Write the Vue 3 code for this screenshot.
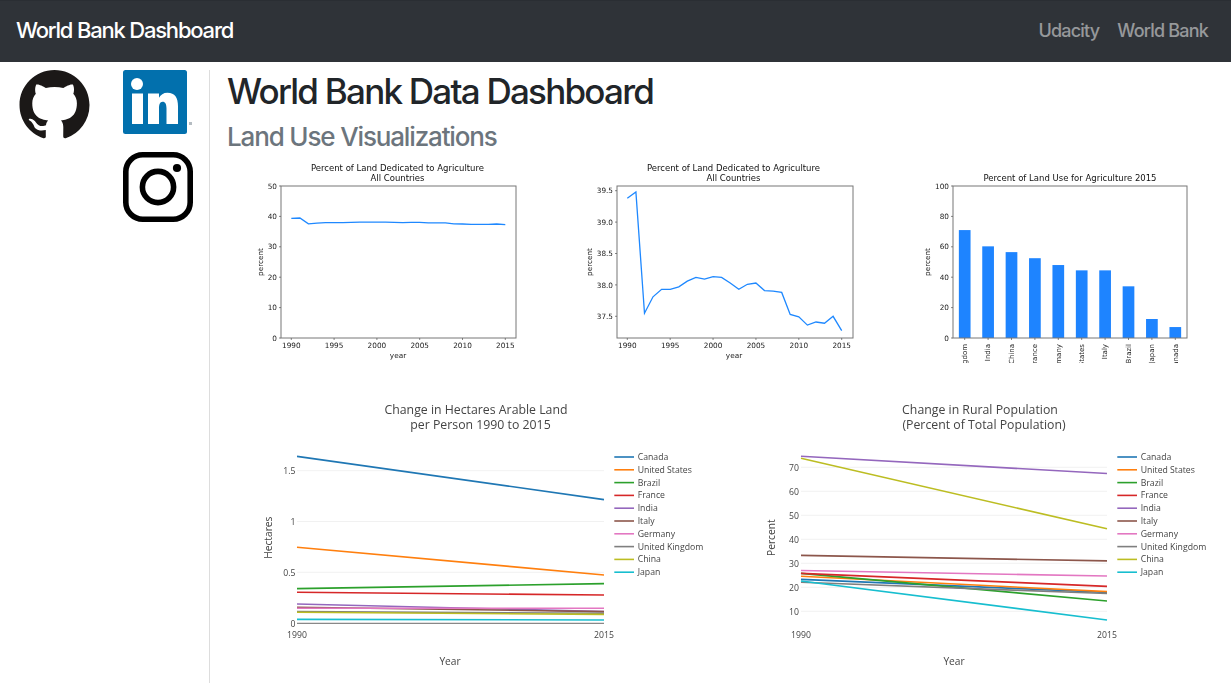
<script setup>
const agri = [39.38,39.48,37.55,37.81,37.93,37.93,37.97,38.06,38.12,38.09,38.13,38.12,38.03,37.93,38.01,38.03,37.91,37.90,37.88,37.53,37.49,37.36,37.41,37.39,37.50,37.27]
const pts = (fx, fy) => agri.map((v, i) => `${fx(i).toFixed(1)},${fy(v).toFixed(1)}`).join(' ')
const line1 = pts(i => 291.3 + i * 8.56, v => 338 - v * 3.04)
const line2 = pts(i => 627.3 + i * 8.576, v => 190.7 + (39.5 - v) * 62.8)

const ticks1x = [1990,1995,2000,2005,2010,2015].map((y, i) => ({ y, x: 291.3 + i * 42.8 }))
const ticks2x = [1990,1995,2000,2005,2010,2015].map((y, i) => ({ y, x: 627.3 + i * 42.88 }))
const ticks1y = [0,10,20,30,40,50].map(v => ({ v, y: 338 - v * 3.04 }))
const ticks2y = ['39.5','39.0','38.5','38.0','37.5'].map((v, i) => ({ v, y: 190.7 + i * 31.4 }))
const ticks3y = [0,20,40,60,80,100].map(v => ({ v, y: 338 - v * 1.52 }))
const bars = [['United Kingdom',71],['India',60.3],['China',56.5],['France',52.5],['Germany',48],['United States',44.5],['Italy',44.5],['Brazil',34],['Japan',12.5],['Canada',7.2]]
  .map(([n, v], i) => ({ n, v, x: 953 + 23.4 * (i + 0.5), h: v * 1.52 }))

const names = ['Canada','United States','Brazil','France','India','Italy','Germany','United Kingdom','China','Japan']
const colors = ['#1f77b4','#ff7f0e','#2ca02c','#d62728','#9467bd','#8c564b','#e377c2','#7f7f7f','#bcbd22','#17becf']
const arable = [[1.64,1.215],[.747,.475],[.341,.39],[.305,.278],[.19,.115],[.157,.115],[.148,.148],[.115,.098],[.108,.088],[.039,.033]]
const rural = [[23.3,17.9],[24.6,18.2],[25.8,14.3],[25.8,20.4],[74.6,67.4],[33.3,31],[27,24.7],[22.1,17.4],[73.75,44.4],[22.6,6.4]]

const plotA = {
  box: '232 395 490 288', x0: 297, x1: 604, legendX: 614.3, ylabel: 'Hectares', ylabelX: 268, yearX: 450, tickX: 295.5,
  titles: [['Change in Hectares Arable Land', 476, 413.5], ['per Person 1990 to 2015', 480.5, 428.5]],
  grid: [['1.5', 470.7], ['1', 521.5], ['0.5', 572.3], ['0', 623.3]], zero: 623.3,
  series: arable.map((s, i) => ({ c: colors[i], y0: 623.3 - s[0] * 101.8, y1: 623.3 - s[1] * 101.8 }))
}
const plotB = {
  box: '736 395 490 288', x0: 801, x1: 1107, legendX: 1117.3, ylabel: 'Percent', ylabelX: 771.7, yearX: 954, tickX: 799,
  titles: [['Change in Rural Population', 980, 413.5], ['(Percent of Total Population)', 984, 428.5]],
  grid: [70,60,50,40,30,20,10].map(v => [String(v), 635.3 - v * 2.4]), zero: null,
  series: rural.map((s, i) => ({ c: colors[i], y0: 635.3 - s[0] * 2.4, y1: 635.3 - s[1] * 2.4 }))
}
const plots = [plotA, plotB]
const legend = names.map((n, i) => ({ n, c: colors[i], y: 457 + i * 12.8 }))
</script>

<template>
  <div class="page">
    <nav class="navbar">
      <a class="brand">World Bank Dashboard</a>
      <div class="links">
        <a>Udacity</a>
        <a>World Bank</a>
      </div>
    </nav>

    <div class="layout">
      <aside class="side">
        <svg class="github" viewBox="0 0 16 16" width="71" height="70" aria-label="GitHub">
          <path fill="#1b1817" d="M8 0C3.58 0 0 3.58 0 8c0 3.54 2.29 6.53 5.47 7.59.4.07.55-.17.55-.38 0-.19-.01-.82-.01-1.49-2.01.37-2.53-.49-2.69-.94-.09-.23-.48-.94-.82-1.13-.28-.15-.68-.52-.01-.53.63-.01 1.08.58 1.23.82.72 1.21 1.87.87 2.33.66.07-.52.28-.87.51-1.07-1.78-.2-3.64-.89-3.64-3.95 0-.87.31-1.59.82-2.15-.08-.2-.36-1.02.08-2.12 0 0 .67-.21 2.2.82.64-.18 1.32-.27 2-.27.68 0 1.36.09 2 .27 1.53-1.04 2.2-.82 2.2-.82.44 1.1.16 1.92.08 2.12.51.56.82 1.27.82 2.15 0 3.07-1.87 3.75-3.65 3.95.29.25.54.73.54 1.48 0 1.07-.01 1.93-.01 2.2 0 .21.15.46.55.38A8.013 8.013 0 0016 8c0-4.42-3.58-8-8-8z"/>
        </svg>
        <svg class="linkedin" viewBox="0 0 70 70" width="70" height="70" aria-label="LinkedIn">
          <rect width="64" height="64" rx="2.5" fill="#0270ad"/>
          <circle cx="14" cy="14" r="6" fill="#fff"/>
          <rect x="9" y="23.5" width="11" height="30.5" fill="#fff"/>
          <path fill="#fff" d="M25 23.5h11v4.2c1.6-2.9 4.4-5 8.4-5 7.6 0 10.6 5 10.6 13.4V54H43.5V38.6c0-4.2-1.2-6.9-3.9-6.9-2.8 0-3.6 2.9-3.6 6.9V54H25z"/>
          <rect x="66" y="52" width="3" height="3" fill="#b5bcc2"/>
        </svg>
        <svg class="instagram" viewBox="0 0 70 70" width="70" height="70" aria-label="Instagram">
          <rect x="2.8" y="2.8" width="64.4" height="64.4" rx="17" fill="none" stroke="#000" stroke-width="5.6"/>
          <circle cx="35" cy="35" r="15.6" fill="none" stroke="#000" stroke-width="5.6"/>
          <circle cx="54" cy="16" r="4.1" fill="#000"/>
        </svg>
      </aside>

      <main class="content">
        <h1>World Bank Data Dashboard</h1>
        <h2>Land Use Visualizations</h2>

        <div class="row-top">
          <svg class="chart soft" viewBox="232 160 320 203" width="320" height="203">
            <text class="mt" x="397.5" y="171">Percent of Land Dedicated to Agriculture</text>
            <text class="mt" x="397.5" y="181">All Countries</text>
            <rect class="spine" x="281" y="186" width="235" height="152"/>
            <g v-for="t in ticks1x" :key="t.y">
              <line class="tick" :x1="t.x" :x2="t.x" y1="338" y2="340"/>
              <text class="ml mid" :x="t.x" y="348">{{ t.y }}</text>
            </g>
            <g v-for="t in ticks1y" :key="t.v">
              <line class="tick" x1="279" x2="281" :y1="t.y" :y2="t.y"/>
              <text class="ml end" x="277" :y="t.y + 2.6">{{ t.v }}</text>
            </g>
            <polyline class="blue" :points="line1"/>
            <text class="ml mid" x="398" y="358">year</text>
            <text class="ml mid" transform="translate(263 262) rotate(-90)">percent</text>
          </svg>

          <svg class="chart soft" viewBox="568 160 320 203" width="320" height="203">
            <text class="mt" x="733.5" y="171">Percent of Land Dedicated to Agriculture</text>
            <text class="mt" x="733.5" y="181">All Countries</text>
            <rect class="spine" x="617" y="186" width="236" height="152"/>
            <g v-for="t in ticks2x" :key="t.y">
              <line class="tick" :x1="t.x" :x2="t.x" y1="338" y2="340"/>
              <text class="ml mid" :x="t.x" y="348">{{ t.y }}</text>
            </g>
            <g v-for="t in ticks2y" :key="t.v">
              <line class="tick" x1="615" x2="617" :y1="t.y" :y2="t.y"/>
              <text class="ml end" x="613" :y="t.y + 2.6">{{ t.v }}</text>
            </g>
            <polyline class="blue" :points="line2"/>
            <text class="ml mid" x="734" y="358">year</text>
            <text class="ml mid" transform="translate(592 262) rotate(-90)">percent</text>
          </svg>

          <svg class="chart soft" viewBox="904 160 320 203" width="320" height="203">
            <text class="mt" x="1070" y="181">Percent of Land Use for Agriculture 2015</text>
            <rect v-for="b in bars" :key="b.n" class="bar" :x="b.x - 5.85" :y="338 - b.h" width="11.7" :height="b.h"/>
            <rect class="spine" x="953" y="186" width="234" height="152"/>
            <g v-for="t in ticks3y" :key="t.v">
              <line class="tick" x1="951" x2="953" :y1="t.y" :y2="t.y"/>
              <text class="ml end" x="949" :y="t.y + 2.6">{{ t.v }}</text>
            </g>
            <g v-for="b in bars" :key="'l' + b.n">
              <line class="tick" :x1="b.x" :x2="b.x" y1="338" y2="340"/>
              <text class="bl" :transform="`translate(${b.x + 2.2} 344) rotate(-90)`">{{ b.n }}</text>
            </g>
            <text class="ml mid" transform="translate(930 262) rotate(-90)">percent</text>
          </svg>
        </div>

        <div class="row-bottom">
          <svg v-for="p in plots" :key="p.ylabel" class="chart soft" :viewBox="p.box" width="490" height="288">
            <text v-for="t in p.titles" :key="t[0]" class="pt" :x="t[1]" :y="t[2]">{{ t[0] }}</text>
            <g v-for="g in p.grid" :key="g[0]">
              <line v-if="g[1] !== p.zero" class="grid" :x1="p.x0" :x2="p.x1" :y1="g[1]" :y2="g[1]"/>
              <text class="pl end" :x="p.tickX" :y="g[1] + 3.2">{{ g[0] }}</text>
            </g>
            <line v-if="p.zero" class="zero" :x1="p.x0" :x2="p.x1" :y1="p.zero" :y2="p.zero"/>
            <line v-for="s in p.series" :key="s.c" class="trace" :stroke="s.c" :x1="p.x0" :x2="p.x1" :y1="s.y0" :y2="s.y1"/>
            <text class="pl mid" :x="p.x0" y="638.3">1990</text>
            <text class="pl mid" :x="p.x1" y="638.3">2015</text>
            <text class="pa mid" :x="p.yearX" y="664.5">Year</text>
            <text class="pa mid" :transform="`translate(${p.ylabelX + 3.5} 537.7) rotate(-90)`">{{ p.ylabel }}</text>
            <g v-for="l in legend" :key="l.n">
              <line class="trace" :stroke="l.c" :x1="p.legendX" :x2="p.legendX + 19.7" :y1="l.y" :y2="l.y"/>
              <text class="pl" :x="p.legendX + 23.4" :y="l.y + 3">{{ l.n }}</text>
            </g>
          </svg>
        </div>
      </main>
    </div>
  </div>
</template>

<style>
html, body { margin: 0; background: #fff; }
</style>

<style scoped>
.page { font-family: Inter, "Liberation Sans", sans-serif; color: #212529; }
.navbar {
  height: 62px; box-sizing: border-box; padding: 0 23px 3px 16px;
  display: flex; align-items: center; justify-content: space-between;
  background: #2f3338; border-top: 1px solid #2a2e33;
}
.brand { color: #fff; font-size: 22px; font-weight: 500; letter-spacing: -1.2px; }
.links { display: flex; gap: 18px; }
.links a { color: rgba(255,255,255,.5); font-size: 18px; font-weight: 500; letter-spacing: -.8px; }
.layout { display: flex; margin-top: 8px; height: 613px; }
.side {
  width: 210px; box-sizing: border-box; border-right: 1px solid #ddd;
  padding-left: 19px; display: grid; grid-template-columns: 104px 70px;
  grid-template-rows: 70px 70px; row-gap: 12px; align-content: start;
}
.github { grid-column: 1; grid-row: 1; }
.linkedin { grid-column: 2; grid-row: 1; }
.instagram { grid-column: 2; grid-row: 2; }
.content { flex: 1; padding-left: 17px; min-width: 0; }
h1 { margin: 0 0 8px; font-size: 35px; line-height: 43px; font-weight: 500; letter-spacing: -1.76px; }
h2 { margin: 0 0 8px; font-size: 26px; line-height: 31px; font-weight: 500; letter-spacing: -1.15px; color: #6c757d; }
.row-top { display: flex; gap: 16px; padding-left: 5px; }
.row-bottom { display: flex; gap: 14px; padding-left: 5px; margin-top: 32px; }
.chart { display: block; flex: none; }
.soft { filter: blur(.35px); }
.mt { font: 8.5px "DejaVu Sans", sans-serif; text-anchor: middle; fill: #111; }
.ml { font: 7.3px "DejaVu Sans", sans-serif; fill: #222; }
.bl { font: 7px "DejaVu Sans", sans-serif; fill: #222; text-anchor: end; }
.mid { text-anchor: middle; }
.end { text-anchor: end; }
.spine { fill: none; stroke: #777; stroke-width: 1; }
.tick { stroke: #555; stroke-width: .7; }
.blue { fill: none; stroke: #1e88ff; stroke-width: 1.3; }
.bar { fill: #1e84ff; }
.pt { font: 12.3px "Open Sans", sans-serif; text-anchor: middle; fill: #444; }
.pa { font: 10.2px "Open Sans", sans-serif; fill: #444; }
.pl { font: 8.7px "Open Sans", sans-serif; fill: #444; }
.grid { stroke: #eee; stroke-width: .8; }
.zero { stroke: #444; stroke-width: .8; }
.trace { stroke-width: 1.6; fill: none; }
</style>
